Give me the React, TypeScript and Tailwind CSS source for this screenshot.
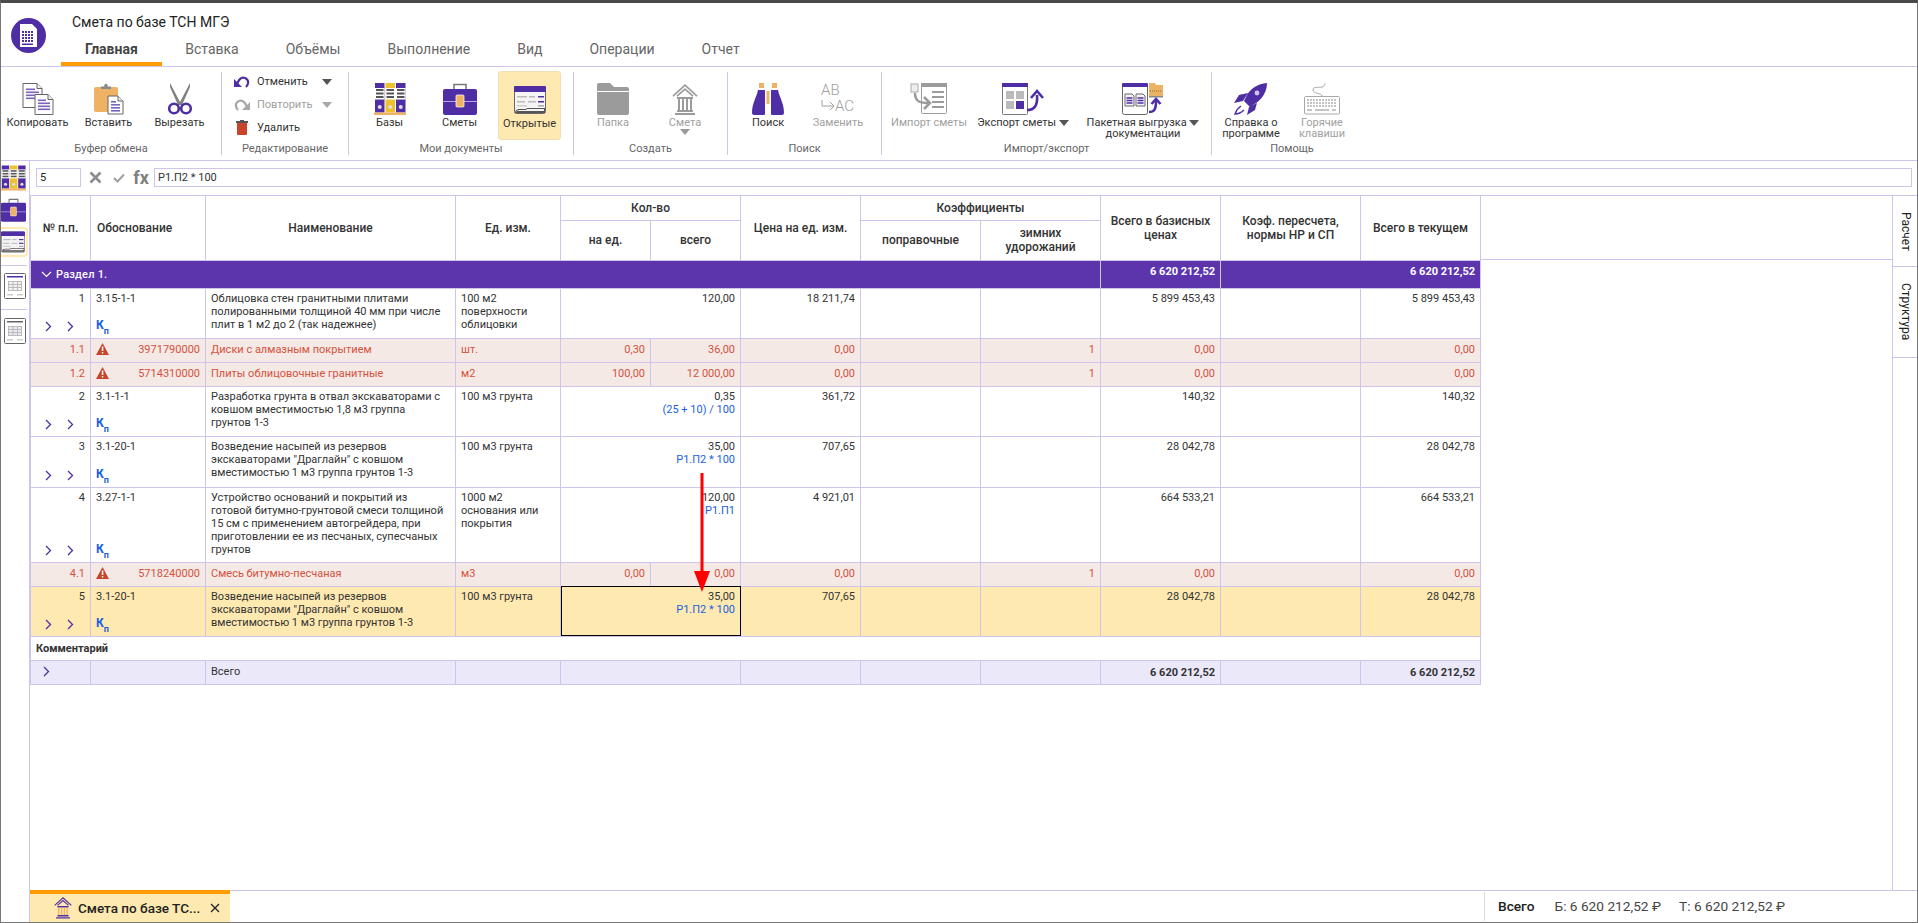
import React from "react";

const P = "#4f2ea5";
const G = "#9b9b9b";

const Binder = ({ w = 32, h = 32 }: { w?: number; h?: number }) => (
  <svg width={w} height={h} viewBox="0 0 32 32">
    {[[1, P], [11.5, "#eec22e"], [22, P]].map(([x, c], i) => (
      <g key={i}>
        <rect x={x as number} y="0" width="9.5" height="29.5" fill={c as string} />
        <rect x={x as number} y="5" width="9.5" height="11.5" fill="#fff" />
        <rect x={(x as number) + 1} y="6" width="7.5" height="2" fill="#555" />
        <rect x={(x as number) + 1} y="9.5" width="7.5" height="2" fill="#555" />
        <rect x={(x as number) + 1} y="13" width="7.5" height="2" fill="#555" />
        <circle cx={(x as number) + 4.75} cy="24" r="2" fill="#ddd" />
      </g>
    ))}
    <rect x="0" y="29.5" width="32" height="2.5" fill="#edb264" />
  </svg>
);
const Briefcase = ({ w = 34, h = 32 }: { w?: number; h?: number }) => (
  <svg width={w} height={h} viewBox="0 0 34 32">
    <path d="M11 6V1.5h12V6" fill="none" stroke="#777" strokeWidth="1.5" />
    <rect x="0" y="6" width="34" height="26" rx="2" fill={P} />
    <rect x="0" y="18" width="34" height="1" fill="#b9a9e0" />
    <rect x="13" y="12" width="8" height="12" rx="1" fill="#edb264" stroke="#fff" strokeWidth=".7" />
  </svg>
);
const Opened = ({ w = 32, h = 28 }: { w?: number; h?: number }) => (
  <svg width={w} height={h} viewBox="0 0 32 28">
    <rect x=".5" y=".5" width="31" height="27" rx="2" fill="#f4f4f4" stroke="#666" />
    <rect x="0" y="0" width="32" height="6" rx="1" fill={P} />
    <rect x="3" y="10" width="10" height="1.5" fill="#bbb" />
    <rect x="15" y="10" width="6" height="1.5" fill="#bbb" />
    <rect x="24" y="10" width="6" height="1.5" fill={P} />
    <rect x="3" y="15" width="8" height="1.5" fill="#bbb" />
    <rect x="14" y="15" width="8" height="1.5" fill="#bbb" />
    <rect x="24" y="15" width="6" height="1.5" fill={P} />
    <rect x="3" y="19" width="10" height="1.5" fill="#ccc" />
    <rect x="24" y="19" width="6" height="1.5" fill="#aaa" />
    <path d="M1 27c0-3 2-4 5-4h6l1-1h18v5z" fill="#555" />
    <path d="M2 26c1-2 3-2 5-2h5l1-1h17v2H2z" fill="#f4f4f4" />
  </svg>
);
const MiniTable = ({ bar }: { bar: string }) => (
  <svg width="22" height="26" viewBox="0 0 22 26">
    <rect x=".5" y=".5" width="21" height="25" rx="1" fill="#fff" stroke="#666" />
    <rect x="3" y="3" width="16" height="1.5" fill={bar} />
    <g stroke="#bbb" strokeWidth="1" fill={bar === P ? "#f2f2f2" : "#ece9f6"}>
      <rect x="4.5" y="8.5" width="13" height="9" />
      <path d="M4.5 11.5h13M4.5 14.5h13M9 8.5v9M13.5 8.5v9" />
    </g>
    <rect x="3" y="21" width="6" height="1.5" fill="#ccc" />
    <rect x="13" y="21" width="6" height="1.5" fill="#ccc" />
  </svg>
);
const Doc = ({ x, y, w, h }: { x: number; y: number; w: number; h: number }) => (
  <g>
    <path d={`M${x} ${y}h${w - 5}l5 5v${h - 5}h-${w}z`} fill="#fff" stroke="#666" />
    <path d={`M${x + w - 5} ${y}v5h5`} fill="#eee" stroke="#666" />
    {[5, 8, 11, 14].map((d) => (
      <rect key={d} x={x + 3} y={y + d} width={d < 8 ? w - 10 : w - 6} height="1.6" fill={P} opacity=".75" />
    ))}
  </g>
);
const Copy = () => (
  <svg width="32" height="32" viewBox="0 0 32 32">
    <Doc x={1} y={0.5} w={19} h={24} />
    <Doc x={13} y={11.5} w={18} h={20} />
  </svg>
);
const Paste = () => (
  <svg width="30" height="32" viewBox="0 0 30 32">
    <rect x="0" y="4" width="24" height="25" rx="2" fill="#edb264" />
    <path d="M7 6V3.5h3.5a1.8 1.8 0 1 1 3 0H17V6z" fill="#8a8a8a" />
    <Doc x={14} y={13} w={15} h={18} />
  </svg>
);
const Scissors = () => (
  <svg width="26" height="32" viewBox="0 0 26 32">
    <path d="M3 0l10 19 10-19v4L15 22h-4L3 4z" fill="#808080" />
    <circle cx="7" cy="25.5" r="4.8" fill="none" stroke={P} strokeWidth="2.6" />
    <circle cx="19" cy="25.5" r="4.8" fill="none" stroke={P} strokeWidth="2.6" />
  </svg>
);
const Folder = () => (
  <svg width="32" height="32" viewBox="0 0 32 32">
    <path d="M0 2a2 2 0 0 1 2-2h11l4 4h13a2 2 0 0 1 2 2v2H0z" fill={G} />
    <path d="M0 9h32v21a2 2 0 0 1-2 2H2a2 2 0 0 1-2-2z" fill={G} />
  </svg>
);
const Temple = ({ c = G, s = 26 }: { c?: string; s?: number }) => (
  <svg width={s} height={s * 1.2} viewBox="0 0 26 31">
    <path d="M1 12L13 1l12 11M5 12L13 5l8 7" fill="none" stroke={c} strokeWidth="1.6" />
    <path d="M5 14h16M5 27h16M3 30h20" stroke={c} strokeWidth="2" />
    <path d="M7 15v11M11 15v11M15 15v11M19 15v11" stroke={c === G ? c : "#edb264"} strokeWidth="2" />
  </svg>
);
const Binoculars = () => (
  <svg width="32" height="32" viewBox="0 0 32 32">
    <rect x="7" y="0" width="5" height="5" fill="#edb264" />
    <rect x="20" y="0" width="5" height="5" fill="#edb264" />
    <path d="M6 7h7v24a1 1 0 0 1-1 1H2a2 2 0 0 1-2-2c0-10 4-14 6-23z" fill={P} />
    <path d="M26 7h-7v24a1 1 0 0 0 1 1h10a2 2 0 0 0 2-2c0-10-4-14-6-23z" fill={P} />
    <rect x="14.5" y="8" width="3" height="13" fill="#edb264" />
  </svg>
);
const Replace = () => (
  <div className="relative h-[32px] w-[36px] text-[#a0a0a0] text-[15px] leading-[15px] font-light">
    <span className="absolute left-[1px] top-0">AB</span>
    <span className="absolute left-[15px] top-[16px]">AC</span>
    <svg className="absolute left-[1px] top-[17px]" width="14" height="12" viewBox="0 0 14 12">
      <path d="M1 0v6h12M9 2l4 4-4 4" fill="none" stroke="#a0a0a0" />
    </svg>
  </div>
);
const ImportIc = () => (
  <svg width="38" height="32" viewBox="0 0 38 32">
    <rect x="1" y="1" width="7" height="8" fill="#eee" stroke="#aaa" />
    <rect x="11.5" y=".5" width="25" height="30" rx="1" fill="#fff" stroke={G} />
    <rect x="11" y="0" width="26" height="4" fill={G} />
    <g fill={G}>
      <rect x="22" y="8" width="12" height="2" />
      <rect x="22" y="13" width="12" height="2" />
      <rect x="22" y="18" width="12" height="2" />
      <rect x="22" y="23" width="12" height="2" />
    </g>
    <path d="M5 10c0 7 3 10 13 10M14 14l6 6-6 6" fill="none" stroke={G} strokeWidth="2.5" />
  </svg>
);
const ExportIc = () => (
  <svg width="42" height="32" viewBox="0 0 42 32">
    <rect x=".5" y=".5" width="25" height="31" rx="1" fill="#fff" stroke="#777" />
    <rect x="0" y="0" width="26" height="4" fill={P} />
    <rect x="4" y="8" width="8" height="8" fill="#bbb" />
    <rect x="14" y="8" width="8" height="8" fill="#bbb" />
    <rect x="4" y="18" width="8" height="8" fill="#bbb" />
    <rect x="14" y="18" width="8" height="8" fill={P} />
    <path d="M25 27c7 0 11-4 10-15" fill="none" stroke={P} strokeWidth="2.6" />
    <path d="M29 15l6-7 6 7" fill="none" stroke={P} strokeWidth="2.6" />
  </svg>
);
const BatchIc = () => (
  <svg width="42" height="32" viewBox="0 0 42 32">
    <rect x=".5" y=".5" width="25" height="31" rx="2" fill="#fff" stroke="#666" />
    <rect x="0" y="0" width="26" height="4" rx="1" fill={P} />
    <path d="M3 11h7l2 2v10H3zM14 11h7l2 2v10h-9z" fill="#f4f2fa" stroke="#666" />
    <path d="M4.5 15h6M4.5 17.5h6M4.5 20h6M15.5 15h6M15.5 17.5h6M15.5 20h6" stroke={P} strokeWidth="1.3" />
    <path d="M27 0h6l1 2h7v4H27z" fill="#edb264" />
    <rect x="27" y="5" width="14" height="8" fill="#edb264" />
    <path d="M28 8h12" stroke="#8a6a3a" strokeDasharray="1 1" />
    <rect x="27" y="13" width="14" height="1.5" fill="#888" />
    <path d="M27 29c5 0 7-2 7-11" fill="none" stroke={P} strokeWidth="2.6" />
    <path d="M29.5 21l4.500-5 4.500 5" fill="none" stroke={P} strokeWidth="2.6" />
  </svg>
);
const Rocket = () => (
  <svg width="34" height="32" viewBox="0 0 34 32">
    <path d="M33 0C24 1 16 5 12 14l-2 4 6 6 3-2c9-5 14-13 14-22z" fill={P} />
    <circle cx="23" cy="10" r="2.4" fill="#cfc4ec" />
    <path d="M14 10L5 12 0 20l9-2zM23 20l-2 7-8 5 2-8z" fill={P} />
    <path d="M7 23c-3 2-5 5-6 8 4 0 7-2 9-4" fill="none" stroke={P} strokeWidth="1.5" />
  </svg>
);
const Keyboard = () => (
  <svg width="36" height="32" viewBox="0 0 36 32">
    <path d="M18 13c0-3-9-2-9-6s6-2 9-3 3-3 3-4" fill="none" stroke="#a8a8a8" />
    <rect x=".5" y="13.5" width="35" height="17.5" rx="1" fill="#fff" stroke="#a8a8a8" />
    {[16, 19, 22].map((y) =>
      [3, 6, 9, 12, 15, 18, 21, 24, 27, 30].map((x) => <rect key={`${x}-${y}`} x={x} y={y} width="2" height="2" fill="#c4c4c4" />)
    )}
    <rect x="3" y="26" width="5" height="2" fill="#c4c4c4" />
    <rect x="11" y="26" width="14" height="2" fill="#c4c4c4" />
    <rect x="28" y="26" width="4" height="2" fill="#c4c4c4" />
  </svg>
);
const Undo = ({ c, flip }: { c: string; flip?: boolean }) => (
  <svg width="16" height="14" viewBox="0 0 16 14" className={flip ? "-scale-x-100" : ""}>
    <path d="M3 9C5 4 8 2 11 3c4 1.5 4 6 1 9" fill="none" stroke={c} strokeWidth="2.2" />
    <path d="M0 4v8h8z" fill={c} />
  </svg>
);
const Trash = () => (
  <svg width="12" height="15" viewBox="0 0 12 15">
    <rect x="0" y="1" width="12" height="2" fill="#555" />
    <rect x="4" y="0" width="4" height="2" fill="#555" />
    <path d="M1 3h10v11a1 1 0 0 1-1 1H2a1 1 0 0 1-1-1z" fill="#c8442c" />
  </svg>
);
const Caret = ({ c = "#555", s = 10 }: { c?: string; s?: number }) => (
  <svg width={s} height={s * 0.6} viewBox="0 0 10 6" className="inline-block">
    <path d="M0 0h10L5 6z" fill={c} />
  </svg>
);
const Chev = () => (
  <svg width="7" height="11" viewBox="0 0 7 11">
    <path d="M1 1l4.500 4.500L1 10" fill="none" stroke={P} strokeWidth="1.3" />
  </svg>
);
const Warn = () => (
  <svg width="13" height="12" viewBox="0 0 13 12">
    <path d="M6.500 0L13 12H0z" fill="#c8442c" />
    <rect x="5.8" y="3.5" width="1.5" height="4.5" fill="#fff" />
    <rect x="5.8" y="9" width="1.5" height="1.5" fill="#fff" />
  </svg>
);

const Btn = ({
  w,
  icon,
  label,
  dis,
  active,
  extra,
}: {
  w: string;
  icon: React.ReactNode;
  label: React.ReactNode;
  dis?: boolean;
  active?: boolean;
  extra?: React.ReactNode;
}) => (
  <div
    className={`${w} flex flex-col items-center text-center text-[11px] shrink-0 ${dis ? "text-[#a0a0a0]" : "text-[#333]"} ${
      active ? "-mt-[12px] pt-[12px] h-[69px] bg-[#fee9b0] rounded-[3px] border border-[#eedfb4]" : ""
    }`}
  >
    <div className="h-[32px] flex items-end justify-center">{icon}</div>
    <div className="mt-[2px] leading-[11px]">{label}</div>
    {extra}
  </div>
);

const Group = ({ w, label, cls, children, last }: { w: string; label: string; cls: string; children: React.ReactNode; last?: boolean }) => (
  <div className={`${w} my-[5px] flex flex-col shrink-0 ${last ? "" : "border-r border-[#cfc4ec]"}`}>
    <div className={`h-[70px] pt-[11px] flex items-start ${cls}`}>{children}</div>
    <div className="text-center text-[11px] leading-[13px] text-[#666]">{label}</div>
  </div>
);

const EditRow = ({ icon, label, dis, caret }: { icon: React.ReactNode; label: string; dis?: boolean; caret?: string }) => (
  <div className={`h-[23px] flex items-center text-[11px] ${dis ? "text-[#a0a0a0]" : "text-[#333]"}`}>
    <div className="w-[16px] flex justify-center">{icon}</div>
    <div className="ml-[7px] w-[65px]">{label}</div>
    {caret && <Caret c={caret} />}
  </div>
);

type R = {
  kind: "main" | "res" | "sel";
  no: string;
  code: string;
  name: string;
  unit?: string;
  qty?: string;
  formula?: string;
  perUnit?: string;
  total?: string;
  price: string;
  winter?: string;
  base: string;
  cur: string;
  tall?: "h-[40px]" | "h-[41px]" | "h-[65px]";
  h: string;
};
const rows: R[] = [
  { kind: "main", no: "1", code: "3.15-1-1", name: "Облицовка стен гранитными плитами полированными толщиной 40 мм при числе плит в 1 м2 до 2 (так надежнее)", unit: "100 м2 поверхности облицовки", qty: "120,00", price: "18 211,74", base: "5 899 453,43", cur: "5 899 453,43", tall: "h-[40px]", h: "h-[50px]" },
  { kind: "res", no: "1.1", code: "3971790000", name: "Диски с алмазным покрытием", unit: "шт.", perUnit: "0,30", total: "36,00", price: "0,00", winter: "1", base: "0,00", cur: "0,00", h: "h-[24px]" },
  { kind: "res", no: "1.2", code: "5714310000", name: "Плиты облицовочные гранитные", unit: "м2", perUnit: "100,00", total: "12 000,00", price: "0,00", winter: "1", base: "0,00", cur: "0,00", h: "h-[24px]" },
  { kind: "main", no: "2", code: "3.1-1-1", name: "Разработка грунта в отвал экскаваторами с ковшом вместимостью 1,8 м3 группа грунтов\u00a01-3", unit: "100 м3 грунта", qty: "0,35", formula: "(25 + 10) / 100", price: "361,72", base: "140,32", cur: "140,32", tall: "h-[40px]", h: "h-[50px]" },
  { kind: "main", no: "3", code: "3.1-20-1", name: 'Возведение насыпей из резервов экскаваторами "Драглайн" с ковшом вместимостью 1 м3 группа грунтов 1-3', unit: "100 м3 грунта", qty: "35,00", formula: "Р1.П2 * 100", price: "707,65", base: "28 042,78", cur: "28 042,78", tall: "h-[41px]", h: "h-[51px]" },
  { kind: "main", no: "4", code: "3.27-1-1", name: "Устройство оснований и покрытий из готовой битумно-грунтовой смеси толщиной 15 см с применением автогрейдера, при приготовлении ее из песчаных, супесчаных грунтов", unit: "1000 м2 основания или покрытия", qty: "120,00", formula: "Р1.П1", price: "4 921,01", base: "664 533,21", cur: "664 533,21", tall: "h-[65px]", h: "h-[75px]" },
  { kind: "res", no: "4.1", code: "5718240000", name: "Смесь битумно-песчаная", unit: "м3", perUnit: "0,00", total: "0,00", price: "0,00", winter: "1", base: "0,00", cur: "0,00", h: "h-[24px]" },
  { kind: "sel", no: "5", code: "3.1-20-1", name: 'Возведение насыпей из резервов экскаваторами "Драглайн" с ковшом вместимостью 1 м3 группа грунтов 1-3', unit: "100 м3 грунта", qty: "35,00", formula: "Р1.П2 * 100", price: "707,65", base: "28 042,78", cur: "28 042,78", tall: "h-[40px]", h: "h-[50px]" },
];

const td = "border border-[#cfc4ec] px-[5px] align-top";
const th = "border border-[#cfc4ec] px-[4px] align-middle text-center text-[12px] leading-[14px] font-medium text-[#333]";

const Row = ({ r }: { r: R }) => {
  const bg = r.kind === "res" ? "bg-[#f5e9e6] text-[#d4523c]" : r.kind === "sel" ? "bg-[#fee9b0] text-[#333]" : "text-[#333]";
  const pad = r.kind === "res" ? "pt-[4px]" : "pt-[3px]";
  return (
    <tr className={`${r.h} ${bg}`}>
      <td className={`${td} ${pad} text-right`}>
        {r.tall ? (
          <div className={`${r.tall} flex flex-col justify-between`}>
            <div>{r.no}</div>
            <div className="flex gap-[15px] pl-[9px]">
              <Chev />
              <Chev />
            </div>
          </div>
        ) : (
          r.no
        )}
      </td>
      <td className={`${td} ${pad}`}>
        {r.tall ? (
          <div className={`${r.tall} flex flex-col justify-between`}>
            <div>{r.code}</div>
            <div className="font-bold text-[#1a5fe0] text-[12px] leading-[13px]">
              К<sub className="text-[9px] leading-[0] align-[-3px]">п</sub>
            </div>
          </div>
        ) : (
          <div className="flex justify-between items-center">
            <Warn />
            <span>{r.code}</span>
          </div>
        )}
      </td>
      <td className={`${td} ${pad}`}>{r.name}</td>
      <td className={`${td} ${pad}`}>{r.unit}</td>
      {r.qty ? (
        <td colSpan={2} className={`${td} ${pad} text-right ${r.kind === "sel" ? "outline-[1px] outline-solid -outline-offset-1 outline-[#000]" : ""}`}>
          <div>{r.qty}</div>
          {r.formula && <div className="text-[#1a5fe0]">{r.formula}</div>}
        </td>
      ) : (
        <>
          <td className={`${td} ${pad} text-right`}>{r.perUnit}</td>
          <td className={`${td} ${pad} text-right`}>{r.total}</td>
        </>
      )}
      <td className={`${td} ${pad} text-right`}>{r.price}</td>
      <td className={td}></td>
      <td className={`${td} ${pad} text-right`}>{r.winter}</td>
      <td className={`${td} ${pad} text-right`}>{r.base}</td>
      <td className={td}></td>
      <td className={`${td} ${pad} text-right`}>{r.cur}</td>
    </tr>
  );
};

export default function App() {
  return (
    <div className="w-[1918px] h-[923px] overflow-hidden flex flex-col bg-white border-t-[3px] border-t-[#4a4a4a] border-l border-l-[#777] border-r border-r-[#777] border-b border-b-[#777] font-[Roboto,sans-serif] text-[11px] leading-[13px] text-[#333]">
      {/* title + tabs */}
      <div className="h-[64px] shrink-0 flex border-b border-[#cfc4ec]">
        <div className="w-[60px] pl-[10px] pt-[15px] shrink-0">
          <svg width="35" height="35" viewBox="0 0 35 35">
            <circle cx="17.5" cy="17.5" r="17.5" fill={P} />
            <path d="M9 6h12l5 5v18H9z" fill="#fff" />
            <g fill={P}>
              {[13, 16, 19, 22].map((y) => [11, 14, 17, 20].map((x) => <rect key={`${x}${y}`} x={x} y={y} width="2" height="2" />))}
              <rect x="11" y="25.5" width="11" height="1.5" />
            </g>
          </svg>
        </div>
        <div className="flex flex-col">
          <div className="pl-[11px] pt-[12px] text-[14px] leading-[15px] text-[#222]">Смета по базе ТСН МГЭ</div>
          <div className="flex mt-[10px] text-[14px] leading-[15px] text-[#666]">
            <div className="px-[24px] h-[26px] pt-[2px] border-b-[4px] border-[#ff9d00] font-bold text-[#444]">Главная</div>
            {["Вставка", "Объёмы", "Выполнение", "Вид", "Операции", "Отчет"].map((t) => (
              <div key={t} className="px-[23.5px] pt-[2px]">
                {t}
              </div>
            ))}
          </div>
        </div>
      </div>
      {/* ribbon */}
      <div className="h-[94px] shrink-0 flex border-b border-[#cfc4ec]">
        <Group w="w-[221px]" label="Буфер обмена" cls="pl-[1px]">
          <Btn w="w-[71px]" icon={<Copy />} label="Копировать" />
          <Btn w="w-[71px]" icon={<Paste />} label="Вставить" />
          <Btn w="w-[71px]" icon={<Scissors />} label="Вырезать" />
        </Group>
        <Group w="w-[127px]" label="Редактирование" cls="flex-col !pt-0 !h-[72px] -mt-[2px] pl-[12px]">
          <EditRow icon={<Undo c={P} />} label="Отменить" caret="#555" />
          <EditRow dis icon={<Undo c="#a8a8a8" flip />} label="Повторить" caret="#a8a8a8" />
          <EditRow icon={<Trash />} label="Удалить" />
        </Group>
        <Group w="w-[225px]" label="Мои документы" cls="pl-[9px] gap-[7px]">
          <Btn w="w-[63px]" icon={<Binder />} label="Базы" />
          <Btn w="w-[63px]" icon={<Briefcase />} label="Сметы" />
          <Btn w="w-[63px]" active icon={<div className="mb-[2px] flex"><Opened /></div>} label="Открытые" />
        </Group>
        <Group w="w-[154px]" label="Создать" cls="pl-[9px] gap-[12px]">
          <Btn w="w-[60px]" dis icon={<Folder />} label="Папка" />
          <Btn w="w-[60px]" dis icon={<Temple />} label="Смета" extra={<div className="mt-[1px] flex"><Caret c="#999" /></div>} />
        </Group>
        <Group w="w-[154px]" label="Поиск" cls="pl-[10px] gap-[10px]">
          <Btn w="w-[60px]" icon={<Binoculars />} label="Поиск" />
          <Btn w="w-[60px]" dis icon={<Replace />} label="Заменить" />
        </Group>
        <Group w="w-[330px]" label="Импорт/экспорт" cls="pl-[5px] gap-[2px]">
          <Btn w="w-[84px]" dis icon={<ImportIc />} label="Импорт сметы" />
          <Btn w="w-[100px]" icon={<ExportIc />} label={<>Экспорт сметы <Caret /></>} />
          <Btn w="w-[130px] ml-[3px]" icon={<BatchIc />} label={<>Пакетная выгрузка <Caret /><br />документации</>} />
        </Group>
        <Group w="w-[160px]" last label="Помощь" cls="pl-[6px] gap-[5px]">
          <Btn w="w-[66px]" icon={<Rocket />} label={<>Справка о<br />программе</>} />
          <Btn w="w-[66px]" dis icon={<Keyboard />} label={<>Горячие<br />клавиши</>} />
        </Group>
      </div>
      {/* body */}
      <div className="flex-1 flex min-h-0">
        <div className="w-[29px] shrink-0 border-r border-[#cfc4ec] flex flex-col pt-[4px]">
          <Binder w={25} h={26} />
          <div className="mt-[7px]">
            <Briefcase w={25} h={24} />
          </div>
          <div className="mt-[5px] h-[30px] w-[28px] -ml-[1px] pl-[1px] pt-[2px] border-[2px] border-l-0 border-[#fee9b0] rounded-r-[4px]">
            <Opened w={24} h={22} />
          </div>
          <div className="mt-[8px] h-[1px] w-[26px] bg-[#cfc4ec]" />
          <div className="mt-[7px] pl-[3px]">
            <MiniTable bar={P} />
          </div>
          <div className="mt-[10px] h-[1px] w-[26px] bg-[#cfc4ec]" />
          <div className="mt-[8px] pl-[3px]">
            <MiniTable bar="#666" />
          </div>
        </div>
        <div className="flex-1 min-w-0 flex flex-col">
          {/* formula bar */}
          <div className="h-[34px] shrink-0 flex pt-[7px] pl-[6px] pr-[5px]">
            <div className="w-[45px] h-[19px] border border-[#cfc4ec] pl-[3px] leading-[17px] text-[#222]">5</div>
            <div className="w-[29px] flex justify-center pt-[3px]">
              <svg width="13" height="13" viewBox="0 0 13 13">
                <path d="M1.5 1.5l10 10M11.5 1.5l-10 10" stroke="#8c8c8c" strokeWidth="2.6" />
              </svg>
            </div>
            <div className="w-[18px] flex justify-center pt-[5px]">
              <svg width="12" height="10" viewBox="0 0 12 10">
                <path d="M1 5l3.500 3.500L11 1.500" fill="none" stroke="#a0a0a0" strokeWidth="2" />
              </svg>
            </div>
            <div className="w-[26px] text-center text-[18px] leading-[20px] font-bold text-[#808080]">fx</div>
            <div className="flex-1 h-[19px] border border-[#cfc4ec] pl-[3px] leading-[17px] text-[#333]">Р1.П2 * 100</div>
          </div>
          {/* grid */}
          <div className="flex-1 min-h-0 flex border-t border-[#cfc4ec]">
            <div className="relative shrink-0">
              <table className="table-fixed border-collapse w-[1451px] text-[11px] leading-[13px]">
                <colgroup>
                  {[60, 115, 250, 105, 90, 90, 120, 120, 120, 120, 140, 120].map((w, i) => (
                    <col key={i} style={{ width: w }} />
                  ))}
                </colgroup>
                <thead>
                  <tr className="h-[24px]">
                    <th rowSpan={2} className={`${th} border-t-0`}>№ п.п.</th>
                    <th rowSpan={2} className={`${th} border-t-0 !text-left !pl-[6px]`}>Обоснование</th>
                    <th rowSpan={2} className={`${th} border-t-0`}>Наименование</th>
                    <th rowSpan={2} className={`${th} border-t-0`}>Ед. изм.</th>
                    <th colSpan={2} className={`${th} border-t-0`}>Кол-во</th>
                    <th rowSpan={2} className={`${th} border-t-0`}>Цена на ед. изм.</th>
                    <th colSpan={2} className={`${th} border-t-0`}>Коэффициенты</th>
                    <th rowSpan={2} className={`${th} border-t-0`}>Всего в базисных<br />ценах</th>
                    <th rowSpan={2} className={`${th} border-t-0`}>Коэф. пересчета,<br />нормы НР и СП</th>
                    <th rowSpan={2} className={`${th} border-t-0`}>Всего в текущем</th>
                  </tr>
                  <tr className="h-[40px]">
                    <th className={th}>на ед.</th>
                    <th className={th}>всего</th>
                    <th className={th}>поправочные</th>
                    <th className={th}>зимних<br />удорожаний</th>
                  </tr>
                </thead>
                <tbody>
                  <tr className="h-[28px] bg-[#5c35ad] text-white">
                    <td colSpan={9} className="border border-[#cfc4ec] px-[5px] align-middle">
                      <div className="flex items-center gap-[4px] pl-[5px] font-medium tracking-[0.2px]">
                        <svg width="11" height="7" viewBox="0 0 11 7">
                          <path d="M1 1l4.500 4.500L10 1" fill="none" stroke="#fff" strokeWidth="1.2" />
                        </svg>
                        Раздел 1.
                      </div>
                    </td>
                    <td className={`${td} text-right font-bold pt-[4px]`}>6 620 212,52</td>
                    <td colSpan={2} className={`${td} text-right font-bold pt-[4px]`}>6 620 212,52</td>
                  </tr>
                  {rows.map((r) => (
                    <Row key={r.no} r={r} />
                  ))}
                  <tr className="h-[24px]">
                    <td colSpan={12} className="border border-[#cfc4ec] px-[5px] font-bold align-middle">Комментарий</td>
                  </tr>
                  <tr className="h-[24px] bg-[#ebe8fa] text-[#333]">
                    <td className={`${td} pt-[5px] !pl-[12px]`}>
                      <Chev />
                    </td>
                    <td className={td}></td>
                    <td className={`${td} pt-[4px]`}>Всего</td>
                    <td className={td}></td>
                    <td colSpan={2} className={td}></td>
                    <td className={td}></td>
                    <td className={td}></td>
                    <td className={td}></td>
                    <td className={`${td} text-right font-bold pt-[5px]`}>6 620 212,52</td>
                    <td className={td}></td>
                    <td className={`${td} text-right font-bold pt-[5px]`}>6 620 212,52</td>
                  </tr>
                </tbody>
              </table>
              <svg className="absolute left-[664px] top-[277px] z-10" width="16" height="120" viewBox="0 0 16 120">
                <rect x="6.5" y="0" width="3" height="100" fill="#f00" />
                <path d="M0 98h16l-8 21z" fill="#f00" />
              </svg>
            </div>
            <div className="flex-1 h-[64px] border-b border-[#cfc4ec]" />
            <div className="w-[25px] shrink-0 border-l border-[#cfc4ec] flex flex-col text-[12px] leading-[14px] text-[#222]">
              <div className="h-[71px] border-b border-[#cfc4ec] flex items-center justify-center pl-[1px]">
                <span className="[writing-mode:vertical-rl]">Расчет</span>
              </div>
              <div className="h-[91px] border-b border-[#cfc4ec] flex items-center justify-center pl-[1px]">
                <span className="[writing-mode:vertical-rl]">Структура</span>
              </div>
            </div>
          </div>
          {/* bottom */}
          <div className="h-[32px] shrink-0 flex border-t border-[#cfc4ec]">
            <div className="w-[200px] bg-[#fee9b0] border-t-[4px] border-[#ff9d00] -mt-[1px] flex items-center pl-[24px] text-[13.5px] font-medium text-[#222]">
              <Temple c={P} s={18} />
              <span className="ml-[6px]">Смета по базе ТС...</span>
              <svg className="ml-[10px]" width="10" height="10" viewBox="0 0 10 10">
                <path d="M1 1l8 8M9 1l-8 8" stroke="#222" strokeWidth="1.3" />
              </svg>
            </div>
            <div className="ml-[1254px] flex items-center gap-[18px] pl-[13px] border-l border-[#ddd] my-[1px] text-[13.7px] text-[#444]">
              <span className="font-medium text-[#222] mr-[2px]">Всего</span>
              <span>Б: 6 620 212,52 ₽</span>
              <span>Т: 6 620 212,52 ₽</span>
            </div>
          </div>
        </div>
      </div>
    </div>
  );
}
